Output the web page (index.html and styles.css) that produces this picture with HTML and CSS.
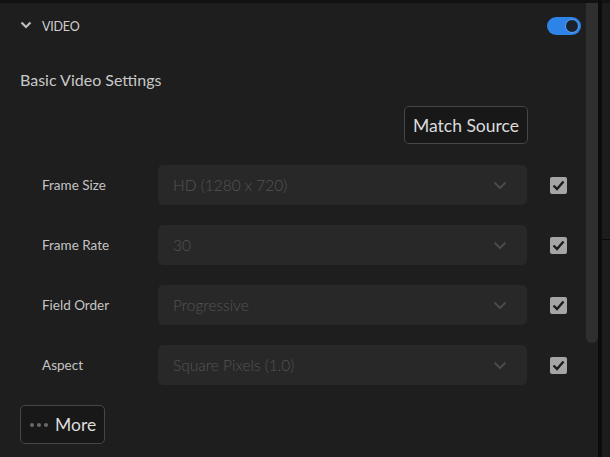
FILE: index.html
```html
<!DOCTYPE html>
<html>
<head>
<meta charset="utf-8">
<link rel="stylesheet" href="styles.css">
</head>
<body>
<div class="app">
  <div class="panel">
    <div class="content">
      <div class="section-head">
        <svg class="chev" width="12" height="8" viewBox="0 0 12 8"><path d="M1.5 1.5 L6 6 L10.5 1.5" fill="none" stroke="#bdbdbd" stroke-width="2.2"/></svg>
        <span class="section-title">VIDEO</span>
        <span class="toggle"><span class="knob"></span></span>
      </div>
      <div class="sub-title">Basic Video Settings</div>
      <div class="match-row"><button class="btn">Match Source</button></div>
      <div class="rows">
        <div class="label">Frame Size</div>
        <div class="select"><span>HD (1280 x 720)</span><svg class="dd" width="14" height="9" viewBox="0 0 14 9"><path d="M1.5 1.5 L7 7 L12.5 1.5" fill="none" stroke="#4a4a4a" stroke-width="2"/></svg></div>
        <div class="check"><svg width="13" height="11" viewBox="0 0 13 11"><path d="M1.5 5.5 L5 9 L11.5 1.5" fill="none" stroke="#1c1c1c" stroke-width="2.4"/></svg></div>

        <div class="label">Frame Rate</div>
        <div class="select"><span>30</span><svg class="dd" width="14" height="9" viewBox="0 0 14 9"><path d="M1.5 1.5 L7 7 L12.5 1.5" fill="none" stroke="#4a4a4a" stroke-width="2"/></svg></div>
        <div class="check"><svg width="13" height="11" viewBox="0 0 13 11"><path d="M1.5 5.5 L5 9 L11.5 1.5" fill="none" stroke="#1c1c1c" stroke-width="2.4"/></svg></div>

        <div class="label">Field Order</div>
        <div class="select"><span>Progressive</span><svg class="dd" width="14" height="9" viewBox="0 0 14 9"><path d="M1.5 1.5 L7 7 L12.5 1.5" fill="none" stroke="#4a4a4a" stroke-width="2"/></svg></div>
        <div class="check"><svg width="13" height="11" viewBox="0 0 13 11"><path d="M1.5 5.5 L5 9 L11.5 1.5" fill="none" stroke="#1c1c1c" stroke-width="2.4"/></svg></div>

        <div class="label">Aspect</div>
        <div class="select"><span>Square Pixels (1.0)</span><svg class="dd" width="14" height="9" viewBox="0 0 14 9"><path d="M1.5 1.5 L7 7 L12.5 1.5" fill="none" stroke="#4a4a4a" stroke-width="2"/></svg></div>
        <div class="check"><svg width="13" height="11" viewBox="0 0 13 11"><path d="M1.5 5.5 L5 9 L11.5 1.5" fill="none" stroke="#1c1c1c" stroke-width="2.4"/></svg></div>
      </div>
      <button class="btn more"><svg width="20" height="6" viewBox="0 0 20 6"><circle cx="3" cy="3" r="2" fill="#6a6a6a"/><circle cx="10" cy="3" r="2" fill="#6a6a6a"/><circle cx="17" cy="3" r="2" fill="#6a6a6a"/></svg>More</button>
    </div>
    <div class="scrollbar"><div class="thumb"></div></div>
  </div>
  <div class="divider"></div>
  <div class="side"><div class="side-top"></div><div class="side-bottom"></div></div>
</div>
</body>
</html>
```
FILE: styles.css
```css
html, body {
  margin: 0;
  padding: 0;
  background: #121212;
  font-family: Lato, "Open Sans", sans-serif;
}
.app {
  display: flex;
  width: 610px;
  height: 457px;
  overflow: hidden;
}
.panel {
  flex: 0 0 598px;
  display: flex;
  margin-top: 3px;
  background: #1e1e1e;
}
.content {
  flex: 1;
  display: flex;
  flex-direction: column;
  align-items: flex-start;
}
.section-head {
  display: flex;
  align-items: center;
  width: 100%;
  box-sizing: border-box;
  height: 46px;
  padding: 0 5px 0 20px;
}
.chev { margin-right: 10px; margin-top: -2px; }
.section-title {
  color: #cfcfcf;
  font-size: 12.5px;
  letter-spacing: -0.2px;
  flex: 1;
}
.toggle {
  width: 34px;
  height: 18px;
  border-radius: 9px;
  background: #2e83e8;
  display: flex;
  align-items: center;
  justify-content: flex-end;
  padding-right: 2px;
  box-sizing: border-box;
}
.knob {
  width: 14px;
  height: 14px;
  border-radius: 50%;
  background: #1a2230;
  box-sizing: border-box;
  border: 1.5px solid #5fa3f0;
}
.sub-title {
  margin: 21px 0 0 20px;
  color: #c8c8c8;
  font-size: 16px;
  line-height: 20px;
}
.match-row {
  width: 100%;
  display: flex;
  justify-content: flex-end;
  box-sizing: border-box;
  padding-right: 58px;
  margin-top: 16px;
}
.btn {
  font-family: Lato, "Open Sans", sans-serif;
  background: #181818;
  border: 1px solid #464646;
  border-radius: 5px;
  color: #dcdcdc;
  font-size: 17.5px;
  height: 38px;
  padding: 0 8px;
  display: flex;
  align-items: center;
}
.rows {
  display: grid;
  grid-template-columns: 116px 369px 40px;
  grid-auto-rows: 40px;
  row-gap: 20px;
  padding-left: 42px;
  margin-top: 21px;
  align-items: center;
}
.rows .check { margin-left: 23px; }
.label {
  color: #c4c4c4;
  font-size: 13.5px;
}
.select {
  height: 40px;
  background: #282828;
  border-radius: 5px;
  display: flex;
  align-items: center;
  justify-content: space-between;
  padding: 0 20px 0 15px;
  color: #545454;
  font-size: 15.5px;
  font-weight: 300;
}
.check {
  width: 17px;
  height: 17px;
  background: #a5a5a5;
  border-radius: 2px;
  display: flex;
  align-items: center;
  justify-content: center;
}
.more {
  margin: 20px 0 0 20px;
  height: 39px;
  padding: 0 8px 0 8px;
  gap: 6px;
}
.scrollbar {
  flex: 0 0 12px;
}
.thumb {
  height: 340px;
  background: #2f2f2f;
  border-radius: 0 0 6px 6px;
}
.divider {
  flex: 0 0 4px;
  background: #0c0c0c;
}
.side {
  flex: 1;
  display: flex;
  flex-direction: column;
  margin-top: 3px;
}
.side-top {
  height: 236px;
  background: #1c1c1c;
  border-bottom: 1px solid #0a0a0a;
}
.side-bottom {
  flex: 1;
  background: #1c1c1c;
}
```
